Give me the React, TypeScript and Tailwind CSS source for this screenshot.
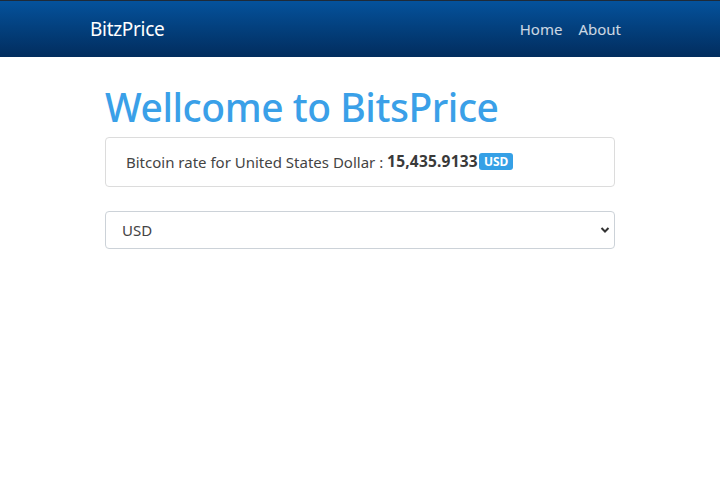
import React from "react";

export default function App() {
  return (
    <div className="min-h-[495px] bg-white" style={{ fontFamily: '"Noto Sans", "Open Sans", sans-serif' }}>
      <nav className="h-[57px] border-t border-[#1e2a38] bg-gradient-to-b from-[#04529c] to-[#022d5e] flex items-center justify-between pl-[90px] pr-[99px]">
        <span className="text-white text-[19px] tracking-[-0.3px]">BitzPrice</span>
        <div className="flex gap-[16px] text-[15px] text-white/80 pt-[1px]">
          <span>Home</span>
          <span>About</span>
        </div>
      </nav>
      <main className="w-[510px] mx-auto">
        <h1 className="text-[#3aa0e8] text-[39px] font-medium leading-[1.2] mt-[27px] mb-[6px] tracking-[-0.45px]">Wellcome to BitsPrice</h1>
        <div className="border border-[#dcdcdc] rounded-[4px] h-[50px] flex items-center pl-[20px] text-[15px] text-[#444]">
          <span>Bitcoin rate for United States Dollar :&nbsp;</span>
          <b className="font-bold text-[15.5px] text-[#3a3a3a] tracking-[0.2px]">15,435.9133</b>
          <span className="ml-[1px] bg-[#35a0e6] text-white text-[12px] font-bold rounded-[3px] px-[5px] leading-[17px]">USD</span>
        </div>
        <div className="mt-[24px] relative">
          <div className="h-[38px] border border-[#ccd2d8] rounded-[4px] flex items-center pl-[16px] text-[15px] text-[#444]">USD</div>
          <svg className="absolute right-[5px] top-[15px]" width="10" height="8" viewBox="0 0 10 8">
            <path d="M1.5 2 L5 5.5 L8.5 2" fill="none" stroke="#333" strokeWidth="2" />
          </svg>
        </div>
      </main>
    </div>
  );
}
